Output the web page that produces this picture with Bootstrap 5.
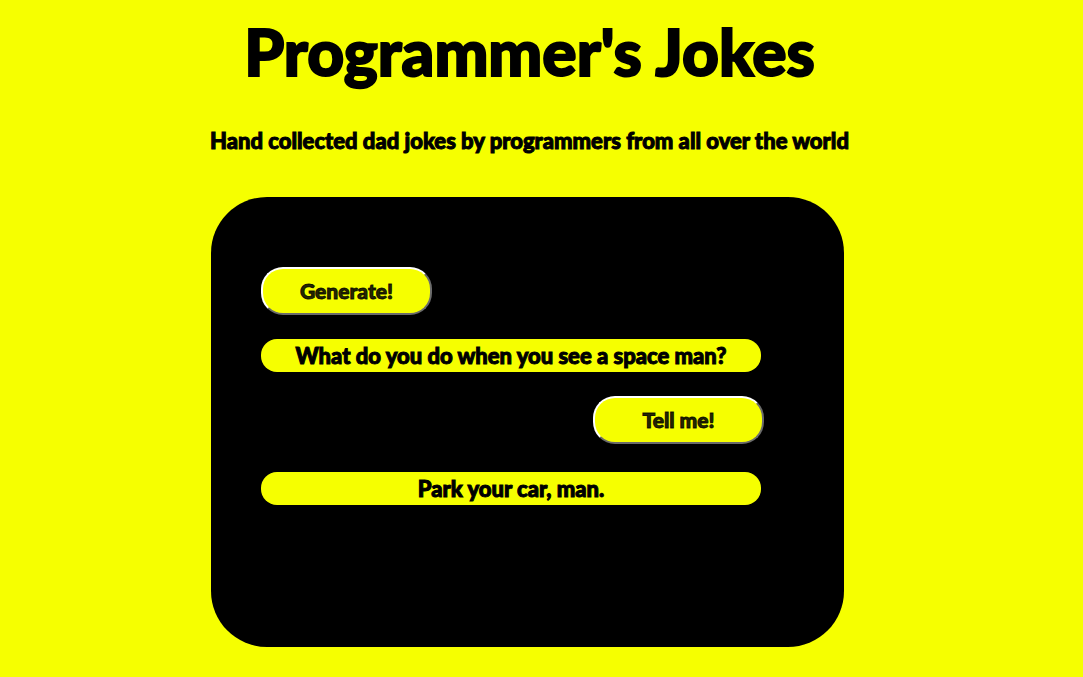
<!DOCTYPE html>
<html lang="en">
<head>
<meta charset="utf-8">
<meta name="viewport" content="width=device-width, initial-scale=1">
<title>Programmer's Jokes</title>
<link href="https://cdn.jsdelivr.net/npm/bootstrap@5.3.0/dist/css/bootstrap.min.css" rel="stylesheet">
<style>
  body { background: #f6ff00; color: #000; font-family: Lato, "Open Sans", sans-serif; font-weight: 900; }
  .page { padding: 12px 28px 28px 0; }
  .page-head { padding-left: 4px; }
  .page-title { font-size: 64px; line-height: 80px; font-weight: 900; margin-bottom: 33px; -webkit-text-stroke: 2px #000; }
  .tagline { font-size: 22px; line-height: 32px; font-weight: 900; margin-bottom: 40px; }
  .joke-box { width: 100%; max-width: 633px; min-height: 450px; background: #000; border-radius: 56px; padding: 70px 80px 50px 50px; gap: 24px; }
  .joke-btn { width: 171px; height: 48px; background: #f6ff00; color: rgba(0, 0, 0, .85); border: 2px solid; border-color: #fff #6b6b6b #6b6b6b #fff; border-radius: 22px; font-size: 21px; line-height: 24px; font-weight: 900; padding: 0; }
  .joke-line { width: 100%; max-width: 500px; min-height: 33px; background: #f6ff00; border-radius: 16px; font-size: 22px; line-height: 33px; text-align: center; margin: 0; }
  .joke-btn, .tagline, .joke-line { -webkit-text-stroke: 1px; }
</style>
</head>
<body>
<main class="page d-flex flex-column align-items-center">
  <header class="page-head text-center">
    <h1 class="page-title">Programmer's Jokes</h1>
    <h2 class="tagline">Hand collected dad jokes by programmers from all over the world</h2>
  </header>
  <section class="joke-box d-flex flex-column">
    <button type="button" class="joke-btn">Generate!</button>
    <p class="joke-line">What do you do when you see a space man?</p>
    <button type="button" class="joke-btn align-self-end">Tell me!</button>
    <p class="joke-line mt-1">Park your car, man.</p>
  </section>
</main>
<script src="https://cdn.jsdelivr.net/npm/bootstrap@5.3.0/dist/js/bootstrap.bundle.min.js"></script>
</body>
</html>
